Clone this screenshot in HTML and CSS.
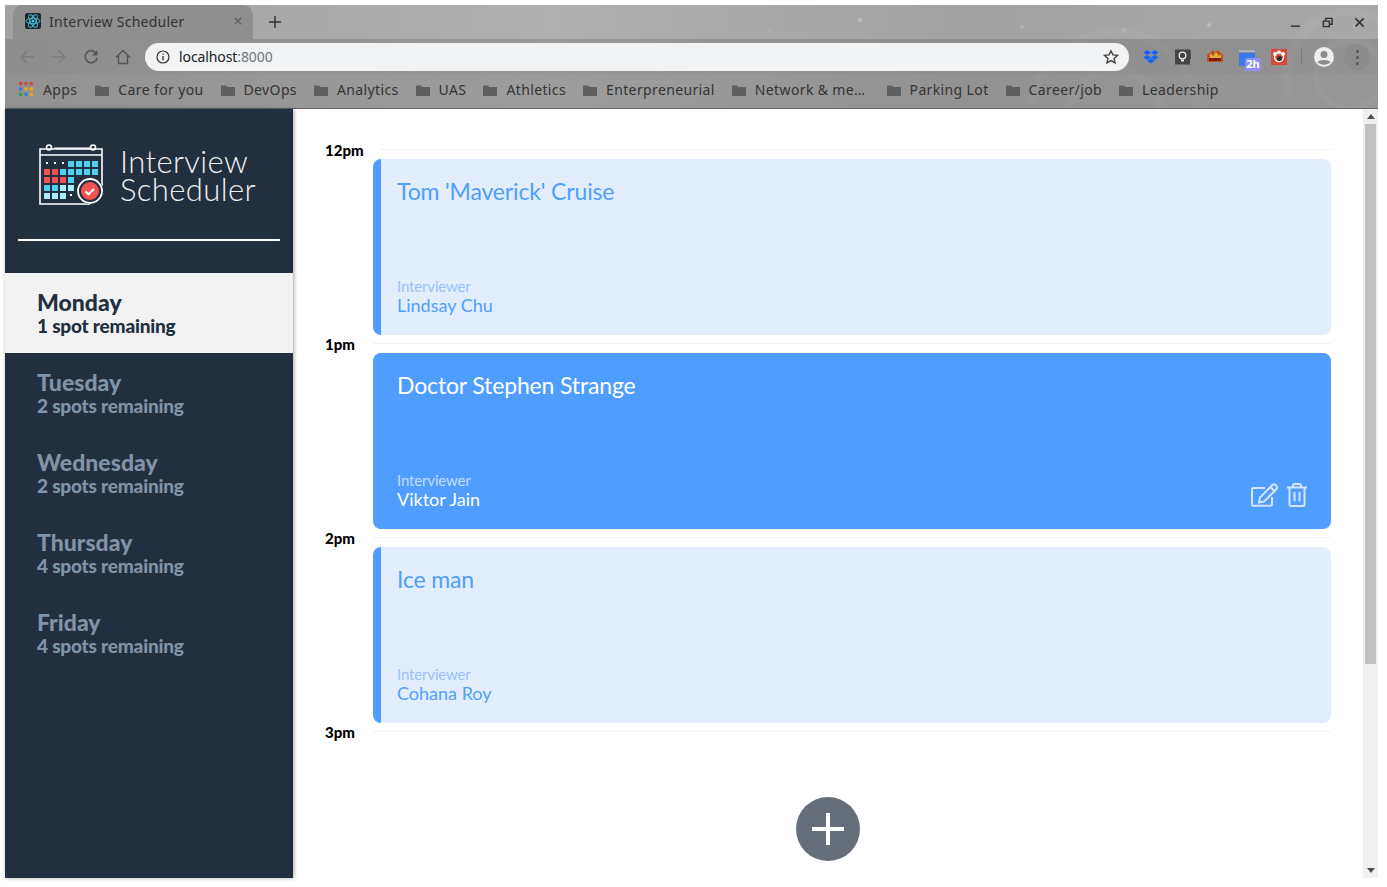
FILE: index.html
```html
<!DOCTYPE html>
<html lang="en">
<head>
    <meta charset="UTF-8">
    <meta name="viewport" content="width=device-width, initial-scale=1.0">
    <title>Interview Scheduler</title>
    <link rel="stylesheet" href="styles.css">
</head>
<body>
<div class="window">

    <div class="chrome">
        <div class="tabstrip">
            <div class="tab">
                <svg class="favicon" viewBox="0 0 16 16">
                    <rect width="16" height="16" rx="2" fill="#20262e"/>
                    <g fill="none" stroke="#4fc3dc" stroke-width="0.9">
                        <ellipse cx="8" cy="8" rx="7" ry="2.8"/>
                        <ellipse cx="8" cy="8" rx="7" ry="2.8" transform="rotate(60 8 8)"/>
                        <ellipse cx="8" cy="8" rx="7" ry="2.8" transform="rotate(120 8 8)"/>
                    </g>
                    <circle cx="8" cy="8" r="1.5" fill="#4fc3dc"/>
                </svg>
                <span class="tab-title">Interview Scheduler</span>
                <svg class="tab-close" viewBox="0 0 10 10"><path d="M1 1l8 8M9 1l-8 8" stroke="#5f5f5f" stroke-width="1.6"/></svg>
            </div>
            <svg class="new-tab" viewBox="0 0 12 12"><path d="M6 0v12M0 6h12" stroke="#333" stroke-width="1.5"/></svg>
            <div class="window-buttons">
                <svg viewBox="0 0 12 12" class="win-btn"><path d="M1 10h10" stroke="#333" stroke-width="1.6"/></svg>
                <svg viewBox="0 0 12 12" class="win-btn"><path d="M4 4V1.500h7v6.500H8M1.500 4.500h6.500v6h-6.500z" fill="none" stroke="#333" stroke-width="1.6"/></svg>
                <svg viewBox="0 0 12 12" class="win-btn"><path d="M1.500 1.500l9 9M10.500 1.500l-9 9" stroke="#333" stroke-width="1.700"/></svg>
            </div>
        </div>

        <div class="toolbar">
            <svg class="nav-icon" viewBox="0 0 16 16"><path d="M15 8H2M8 2L2 8l6 6" fill="none" stroke="#7b7b7b" stroke-width="1.5"/></svg>
            <svg class="nav-icon" viewBox="0 0 16 16"><path d="M1 8h13M8 2l6 6-6 6" fill="none" stroke="#7b7b7b" stroke-width="1.5"/></svg>
            <svg class="nav-icon" viewBox="0 0 16 16"><path d="M13.500 5A6 6 0 1 0 14 9" fill="none" stroke="#555" stroke-width="1.700"/><path d="M14.500 1v5.500H9z" fill="#555"/></svg>
            <svg class="nav-icon" viewBox="0 0 16 16"><path d="M1 8.500L8 1.500l7 7M3.500 7v7.500h9V7" fill="none" stroke="#555" stroke-width="1.500"/></svg>
            <div class="omnibox">
                <svg class="info-icon" viewBox="0 0 14 14"><circle cx="7" cy="7" r="6" fill="none" stroke="#333" stroke-width="1.200"/><path d="M7 6v4.200M7 3.500v1.300" stroke="#333" stroke-width="1.300"/></svg>
                <span class="url">localhost<span class="url-port">:8000</span></span>
                <svg class="star-icon" viewBox="0 0 16 16"><path d="M8 1.800l1.900 4.100 4.500.5-3.300 3 .9 4.400L8 11.600l-4 2.200.9-4.400-3.300-3 4.500-.5z" fill="none" stroke="#444" stroke-width="1.400"/></svg>
            </div>
            <div class="extensions">
                <svg class="ext" viewBox="0 0 16 16"><path d="M4.300 1L0.500 3.500l3.800 2.500L8 3.500zM11.700 1L8 3.500 11.700 6l3.800-2.500zM4.300 6L0.500 8.500 4.300 11 8 8.500zM11.700 6L8 8.500l3.700 2.500 3.800-2.500zM4.300 11.800L8 14.500l3.700-2.700L8 9.300z" fill="#0f62fe"/></svg>
                <svg class="ext" viewBox="0 0 16 16"><rect width="15" height="15" y="0.500" fill="#444"/><path d="M15 1h1v9h-1z" fill="#555"/><circle cx="7.500" cy="6.500" r="3.300" fill="none" stroke="#eee" stroke-width="1.300"/><path d="M6 10.500h3v2H6z" fill="#eee"/></svg>
                <svg class="ext" viewBox="0 0 16 16"><path d="M0 6l4-3 2-2 2 2 3-2 2 2 3 3v7H0z" fill="#c2511f"/><path d="M3 4l3 3 3-4 3 4 2-2v4H3z" fill="#e3b040"/><rect x="2" y="9" width="12" height="3" fill="#7a1c10"/></svg>
                <div class="ext ext-cal">
                    <svg viewBox="0 0 16 16"><rect y="0" width="16" height="2" fill="#aab2c8"/><rect y="3" width="16" height="13" fill="#3b78e7"/></svg>
                    <span class="ext-badge">2h</span>
                </div>
                <svg class="ext" viewBox="0 0 16 16"><rect width="16" height="16" fill="#d84a38"/><circle cx="8" cy="8" r="4.500" fill="none" stroke="#fff" stroke-width="1.500"/><circle cx="4" cy="5" r="2" fill="#fff"/><circle cx="12" cy="5" r="2" fill="#fff"/><circle cx="8" cy="3" r="1.800" fill="#fff"/><circle cx="8.500" cy="9.500" r="2.500" fill="#3a2a20"/></svg>
            </div>
            <div class="toolbar-sep"></div>
            <svg class="avatar" viewBox="0 0 20 20"><circle cx="10" cy="10" r="10" fill="#eee"/><circle cx="10" cy="7.500" r="3.500" fill="#8c8c8c"/><path d="M3.500 15c1.500-2.800 11.500-2.800 13 0-3 3.500-10 3.500-13 0z" fill="#8c8c8c"/></svg>
            <div class="menu-dots"><i></i><i></i><i></i></div>
        </div>

        <div class="bookmarks">
            <div class="bookmark bookmark-apps">
                <svg class="apps-icon" viewBox="0 0 14 14">
                    <path d="M0 0h3v3H0z" fill="#d9453a"/><path d="M5 0h3v3H5z" fill="#d9453a"/><path d="M10 0h3v3h-3z" fill="#d9453a"/>
                    <path d="M0 5h3v3H0z" fill="#3b78e7"/><path d="M5 5h3v3H5z" fill="#f2a60c"/><path d="M10 5h3v3h-3z" fill="#f2a60c"/>
                    <path d="M0 10h3v3H0z" fill="#2f9e50"/><path d="M5 10h3v3H5z" fill="#3b78e7"/><path d="M10 10h3v3h-3z" fill="#f2a60c"/>
                </svg>
                Apps
            </div>
            <div class="bookmark"><svg class="folder" viewBox="0 0 14 12"><path d="M0 1.500h5l1.500 1.500H14v9H0z" fill="#5f5f5f"/></svg>Care for you</div>
            <div class="bookmark"><svg class="folder" viewBox="0 0 14 12"><path d="M0 1.500h5l1.500 1.500H14v9H0z" fill="#5f5f5f"/></svg>DevOps</div>
            <div class="bookmark"><svg class="folder" viewBox="0 0 14 12"><path d="M0 1.500h5l1.500 1.500H14v9H0z" fill="#5f5f5f"/></svg>Analytics</div>
            <div class="bookmark"><svg class="folder" viewBox="0 0 14 12"><path d="M0 1.500h5l1.500 1.500H14v9H0z" fill="#5f5f5f"/></svg>UAS</div>
            <div class="bookmark"><svg class="folder" viewBox="0 0 14 12"><path d="M0 1.500h5l1.500 1.500H14v9H0z" fill="#5f5f5f"/></svg>Athletics</div>
            <div class="bookmark"><svg class="folder" viewBox="0 0 14 12"><path d="M0 1.500h5l1.500 1.500H14v9H0z" fill="#5f5f5f"/></svg>Enterpreneurial</div>
            <div class="bookmark bookmark-cut"><svg class="folder" viewBox="0 0 14 12"><path d="M0 1.500h5l1.500 1.500H14v9H0z" fill="#5f5f5f"/></svg>Network &amp; me…</div>
            <div class="bookmark"><svg class="folder" viewBox="0 0 14 12"><path d="M0 1.500h5l1.500 1.500H14v9H0z" fill="#5f5f5f"/></svg>Parking Lot</div>
            <div class="bookmark"><svg class="folder" viewBox="0 0 14 12"><path d="M0 1.500h5l1.500 1.500H14v9H0z" fill="#5f5f5f"/></svg>Career/job</div>
            <div class="bookmark"><svg class="folder" viewBox="0 0 14 12"><path d="M0 1.500h5l1.500 1.500H14v9H0z" fill="#5f5f5f"/></svg>Leadership</div>
        </div>
    </div>

    <div class="page">
        <aside class="sidebar">
            <div class="brand">
                <svg class="logo" viewBox="0 0 65 61">
                    <g fill="none" stroke="#fff" stroke-width="1.600">
                        <path d="M51 60V60H1V5h62v37"/>
                        <path d="M1 11h62"/>
                        <circle cx="10" cy="3.500" r="2.500"/>
                        <circle cx="54" cy="3.500" r="2.500"/>
                    </g>
                    <g fill="#fff">
                        <path d="M15 3.500h36v1.600H15z"/>
                        <path d="M7 18h2v2H7zM15 18h2v2h-2zM23 18h2v2h-2zM31 50h2v2h-2z"/>
                    </g>
                    <g fill="#4dd0ee">
                        <path d="M29 17h6v6h-6zM37 17h6v6h-6zM45 17h6v6h-6zM53 17h6v6h-6z"/>
                        <path d="M21 25h6v6h-6zM29 25h6v6h-6zM37 25h6v6h-6zM45 25h6v6h-6zM53 25h6v6h-6z"/>
                        <path d="M29 33h6v6h-6zM5 41h6v6H5zM13 41h6v6h-6z"/>
                    </g>
                    <g fill="#f25151">
                        <path d="M5 25h6v6H5zM13 25h6v6h-6z"/>
                        <path d="M5 33h6v6H5zM13 33h6v6h-6zM21 33h6v6h-6z"/>
                    </g>
                    <g fill="#a5effc">
                        <path d="M21 41h6v6h-6zM29 41h6v6h-6z"/>
                        <path d="M5 49h6v6H5zM13 49h6v6h-6zM21 49h6v6h-6z"/>
                    </g>
                    <circle cx="51" cy="47" r="13" fill="#223040"/>
                    <circle cx="51" cy="47" r="12" fill="none" stroke="#fff" stroke-width="1.800"/>
                    <circle cx="51" cy="47" r="9" fill="#f25151"/>
                    <path d="M46.500 47.500l3 2.800 5.500-5.300" fill="none" stroke="#fff" stroke-width="2"/>
                </svg>
                <div class="brand-name">Interview<br>Scheduler</div>
            </div>
            <hr class="brand-rule">
            <ul class="days">
                <li class="day day-selected"><h2>Monday</h2><p>1 spot remaining</p></li>
                <li class="day"><h2>Tuesday</h2><p>2 spots remaining</p></li>
                <li class="day"><h2>Wednesday</h2><p>2 spots remaining</p></li>
                <li class="day"><h2>Thursday</h2><p>4 spots remaining</p></li>
                <li class="day"><h2>Friday</h2><p>4 spots remaining</p></li>
            </ul>
        </aside>

        <main class="schedule">
            <div class="slot">
                <div class="time">12pm</div>
                <div class="slot-body">
                    <hr class="slot-line slot-line-first">
                    <div class="appt">
                        <div class="student">Tom 'Maverick' Cruise</div>
                        <div class="appt-foot">
                            <div>
                                <div class="label">Interviewer</div>
                                <div class="person">Lindsay Chu</div>
                            </div>
                        </div>
                    </div>
                </div>
            </div>
            <div class="slot">
                <div class="time">1pm</div>
                <div class="slot-body">
                    <hr class="slot-line">
                    <div class="appt appt-hover">
                        <div class="student">Doctor Stephen Strange</div>
                        <div class="appt-foot">
                            <div>
                                <div class="label">Interviewer</div>
                                <div class="person">Viktor Jain</div>
                            </div>
                            <div class="actions">
                                <svg class="edit-icon" viewBox="0 0 27 24"><path d="M21 14v7.500a1.300 1.300 0 0 1-1.300 1.300H2.300A1.300 1.300 0 0 1 1 21.500V6.300A1.300 1.300 0 0 1 2.300 5H14" fill="none" stroke="#d3e5ff" stroke-width="2"/><path d="M9 14.500L21.500 2c1-1 2-1 3 0l1 1c1 1 1 2 0 3L13 18.500l-5 1z" fill="none" stroke="#d3e5ff" stroke-width="2"/><path d="M19.500 4l4 4" stroke="#d3e5ff" stroke-width="2"/></svg>
                                <svg class="trash-icon" viewBox="0 0 20 24"><path d="M0 4.500h20M6 4.500V2.500A1.500 1.500 0 0 1 7.500 1h5A1.500 1.500 0 0 1 14 2.500v2M2.500 4.500v17A1.500 1.500 0 0 0 4 23h12a1.500 1.500 0 0 0 1.500-1.500v-17M7.500 9v9.500M12.500 9v9.500" fill="none" stroke="#d3e5ff" stroke-width="2"/></svg>
                            </div>
                        </div>
                    </div>
                </div>
            </div>
            <div class="slot">
                <div class="time">2pm</div>
                <div class="slot-body">
                    <hr class="slot-line">
                    <div class="appt">
                        <div class="student">Ice man</div>
                        <div class="appt-foot">
                            <div>
                                <div class="label">Interviewer</div>
                                <div class="person">Cohana Roy</div>
                            </div>
                        </div>
                    </div>
                </div>
            </div>
            <div class="slot slot-last">
                <div class="time">3pm</div>
                <div class="slot-body">
                    <hr class="slot-line">
                </div>
            </div>
            <button class="add-btn">
                <svg viewBox="0 0 32 32"><path d="M16 0v32M0 16h32" stroke="#fff" stroke-width="4"/></svg>
            </button>
        </main>

        <div class="scrollbar">
            <svg class="arrow" viewBox="0 0 8 5"><path d="M4 0l4 5H0z" fill="#505050"/></svg>
            <div class="thumb"></div>
            <svg class="arrow arrow-down" viewBox="0 0 8 5"><path d="M4 5L0 0h8z" fill="#505050"/></svg>
        </div>
    </div>
</div>
</body>
</html>
```

FILE: styles.css
```css
* {
    box-sizing: border-box;
}
html, body {
    margin: 0;
    height: 100%;
    overflow: hidden;
    background-color: #fff;
}
body {
    padding: 5px 9px 9px 5px;
    font-family: Lato, sans-serif;
}
.window {
    height: 100%;
    display: flex;
    flex-direction: column;
}

/* browser chrome, the specks and rings are the theme picture */
.chrome {
    height: 104px;
    flex: none;
    font-family: "Noto Sans", sans-serif;
    border-bottom: 1px solid #666;
    background-color: #a6a6a6;
    background-image:
        radial-gradient(circle at 1204px 20px, #c8c8c8 0, transparent 3px),
        radial-gradient(circle at 1119px 25px, #bcbcbc 0, transparent 3px),
        radial-gradient(circle at 1017px 22px, #bcbcbc 0, transparent 3px),
        radial-gradient(circle at 855px 15px, #c8c8c8 0, transparent 3px),
        radial-gradient(circle at 765px 25px, #bcbcbc 0, transparent 2px),
        radial-gradient(circle at 1350px 22px, #c0c0c0 0, transparent 3px),
        radial-gradient(circle at 1345px 70px, transparent 30px, rgba(255, 255, 255, 0.06) 32px 36px, transparent 38px, transparent 58px, rgba(255, 255, 255, 0.05) 60px 66px, transparent 68px),
        radial-gradient(circle at 1110px 110px, transparent 40px, rgba(255, 255, 255, 0.04) 42px 48px, transparent 50px, transparent 78px, rgba(255, 255, 255, 0.04) 80px 86px, transparent 88px),
        linear-gradient(90deg, #a2a2a2 0%, #b0b0b0 40%, #a2a2a2 70%, #a8a8a8 100%);
}
.tabstrip {
    height: 34px;
    display: flex;
    align-items: center;
    padding-left: 8px;
}
.tab {
    width: 240px;
    height: 34px;
    display: flex;
    align-items: center;
    padding: 0 11px 2px 12px;
    background-color: #8f8f8f;
    border-radius: 10px 10px 0 0;
}
.favicon {
    width: 16px;
    height: 16px;
    flex: none;
}
.tab-title {
    flex: 1;
    margin-left: 8px;
    font-size: 14px;
    letter-spacing: 0.26px;
    color: #333;
    white-space: nowrap;
}
.tab-close {
    width: 8px;
    height: 8px;
}
.new-tab {
    width: 12px;
    height: 12px;
    margin-left: 16px;
}
.window-buttons {
    margin-left: auto;
    display: flex;
    gap: 21px;
    padding-right: 13px;
}
.win-btn {
    width: 11px;
    height: 11px;
}
.toolbar {
    height: 36px;
    display: flex;
    align-items: center;
    padding-left: 14px;
    background-color: rgba(90, 90, 90, 0.28);
}
.nav-icon {
    width: 16px;
    height: 16px;
    margin-right: 16px;
}
.omnibox {
    width: 984px;
    height: 28px;
    margin-left: -2px;
    display: flex;
    align-items: center;
    padding: 0 10px 0 11px;
    background-color: #f1f3f4;
    border-radius: 14px;
}
.info-icon {
    width: 14px;
    height: 14px;
}
.url {
    margin-left: 9px;
    padding-bottom: 2px;
    font-size: 14px;
    letter-spacing: -0.1px;
    color: #202124;
}
.url-port {
    color: #70757a;
}
.star-icon {
    width: 16px;
    height: 16px;
    margin-left: auto;
}
.extensions {
    display: flex;
    align-items: center;
    gap: 16px;
    margin-left: 14px;
}
.ext {
    width: 16px;
    height: 16px;
    display: block;
}
.ext-cal {
    position: relative;
}
.ext-badge {
    position: absolute;
    left: 6px;
    top: 9px;
    width: 16px;
    height: 13px;
    font-size: 11px;
    font-weight: 700;
    line-height: 12px;
    text-align: center;
    color: #fff;
    background-color: #8f8ff5;
    border-radius: 2px;
}
.toolbar-sep {
    width: 1px;
    height: 16px;
    margin-left: 14px;
    background-color: #7a7a7a;
}
.avatar {
    width: 20px;
    height: 20px;
    margin-left: 12px;
}
.menu-dots {
    width: 26px;
    height: 26px;
    margin-left: 10px;
    display: flex;
    flex-direction: column;
    align-items: center;
    justify-content: center;
    gap: 3px;
    border-radius: 50%;
    background-color: #8c8c8c;
}
.menu-dots i {
    width: 3px;
    height: 3px;
    border-radius: 50%;
    background-color: #555;
}
.bookmarks {
    height: 33px;
    display: flex;
    align-items: center;
    gap: 17px;
    padding: 0 0 4px 14px;
    background-color: rgba(90, 90, 90, 0.22);
}
.bookmark {
    display: flex;
    align-items: center;
    gap: 9px;
    font-size: 14px;
    letter-spacing: 0.37px;
    color: #333;
    white-space: nowrap;
}
.bookmark-apps {
    margin-right: 1px;
}
.bookmark-cut {
    margin-right: 4px;
}
.apps-icon {
    width: 15px;
    height: 15px;
}
.folder {
    width: 14px;
    height: 12px;
}

/* page */
.page {
    flex: 1;
    min-height: 0;
    display: flex;
}
.sidebar {
    width: 288px;
    flex: none;
    background-color: #222f3e;
    box-shadow: 1px 0 4px rgba(0, 0, 0, 0.35);
    position: relative;
}
.brand {
    display: flex;
    align-items: center;
    gap: 16px;
    padding: 35px 0 0 34px;
}
.logo {
    width: 65px;
    height: 61px;
    flex: none;
}
.brand-name {
    margin-top: 1px;
    font-weight: 300;
    font-size: 31px;
    line-height: 28px;
    letter-spacing: 0.4px;
    color: #f0f0f0;
}
.brand-rule {
    height: 2px;
    margin: 34px 13px 32px;
    border: none;
    background-color: #fff;
}
.days {
    list-style: none;
    margin: 0;
    padding: 0;
}
.day {
    height: 80px;
    padding: 17px 0 0 32px;
    color: #7f93a9;
}
.day h2 {
    margin: 0;
    font-size: 23px;
    line-height: 25px;
    font-weight: 900;
}
.day p {
    margin: 0;
    font-size: 19px;
    line-height: 22px;
    font-weight: 900;
    letter-spacing: -0.2px;
}
.day-selected {
    color: #222f3e;
    background-color: #f2f2f2;
}
.schedule {
    flex: 1;
    min-width: 0;
    display: flex;
    flex-direction: column;
    padding: 40px 32px 0 32px;
}
.slot {
    height: 194px;
    display: flex;
}
.slot-last {
    height: 66px;
}
.time {
    width: 48px;
    flex: none;
    margin-top: -9px;
    font-size: 15px;
    line-height: 20px;
    font-weight: 900;
    color: #000;
}
.slot-body {
    flex: 1;
    min-width: 0;
}
.slot-line {
    height: 1px;
    margin: 0 0 9px;
    border: none;
    background-color: #f2f2f2;
}
.slot-line-first {
    margin-left: 7px;
}
.appt {
    height: 176px;
    display: flex;
    flex-direction: column;
    justify-content: space-between;
    padding: 15px 24px 20px 16px;
    color: #4f9eff;
    background-color: #e2eefe;
    border-left: 8px solid #4f9eff;
    border-radius: 8px;
}
.student {
    font-size: 23px;
    line-height: 34px;
    letter-spacing: -0.15px;
}
.appt-foot {
    display: flex;
    align-items: flex-end;
    justify-content: space-between;
}
.label {
    font-size: 15px;
    line-height: 20px;
    letter-spacing: -0.15px;
    color: #97c1fd;
}
.person {
    margin-top: -1px;
    font-size: 18px;
    line-height: 20px;
}
.appt-hover {
    color: #fff;
    background-color: #4f9eff;
}
.appt-hover .label {
    color: #c4dbff;
}
.actions {
    display: flex;
    align-items: center;
    gap: 9px;
    margin-bottom: 2px;
}
.edit-icon {
    width: 27px;
    height: 24px;
}
.trash-icon {
    width: 20px;
    height: 24px;
}
.add-btn {
    width: 64px;
    height: 64px;
    flex: none;
    align-self: center;
    display: flex;
    align-items: center;
    justify-content: center;
    padding: 0;
    border: none;
    border-radius: 50%;
    background-color: #666e79;
}
.add-btn svg {
    width: 32px;
    height: 32px;
}
.scrollbar {
    width: 15px;
    flex: none;
    display: flex;
    flex-direction: column;
    align-items: center;
    padding-top: 5px;
    background-color: #f1f1f1;
}
.arrow {
    width: 8px;
    height: 5px;
    flex: none;
}
.arrow-down {
    margin-top: auto;
    margin-bottom: 5px;
}
.thumb {
    width: 11px;
    height: 540px;
    margin-top: 5px;
    background-color: #c1c1c1;
}
```
